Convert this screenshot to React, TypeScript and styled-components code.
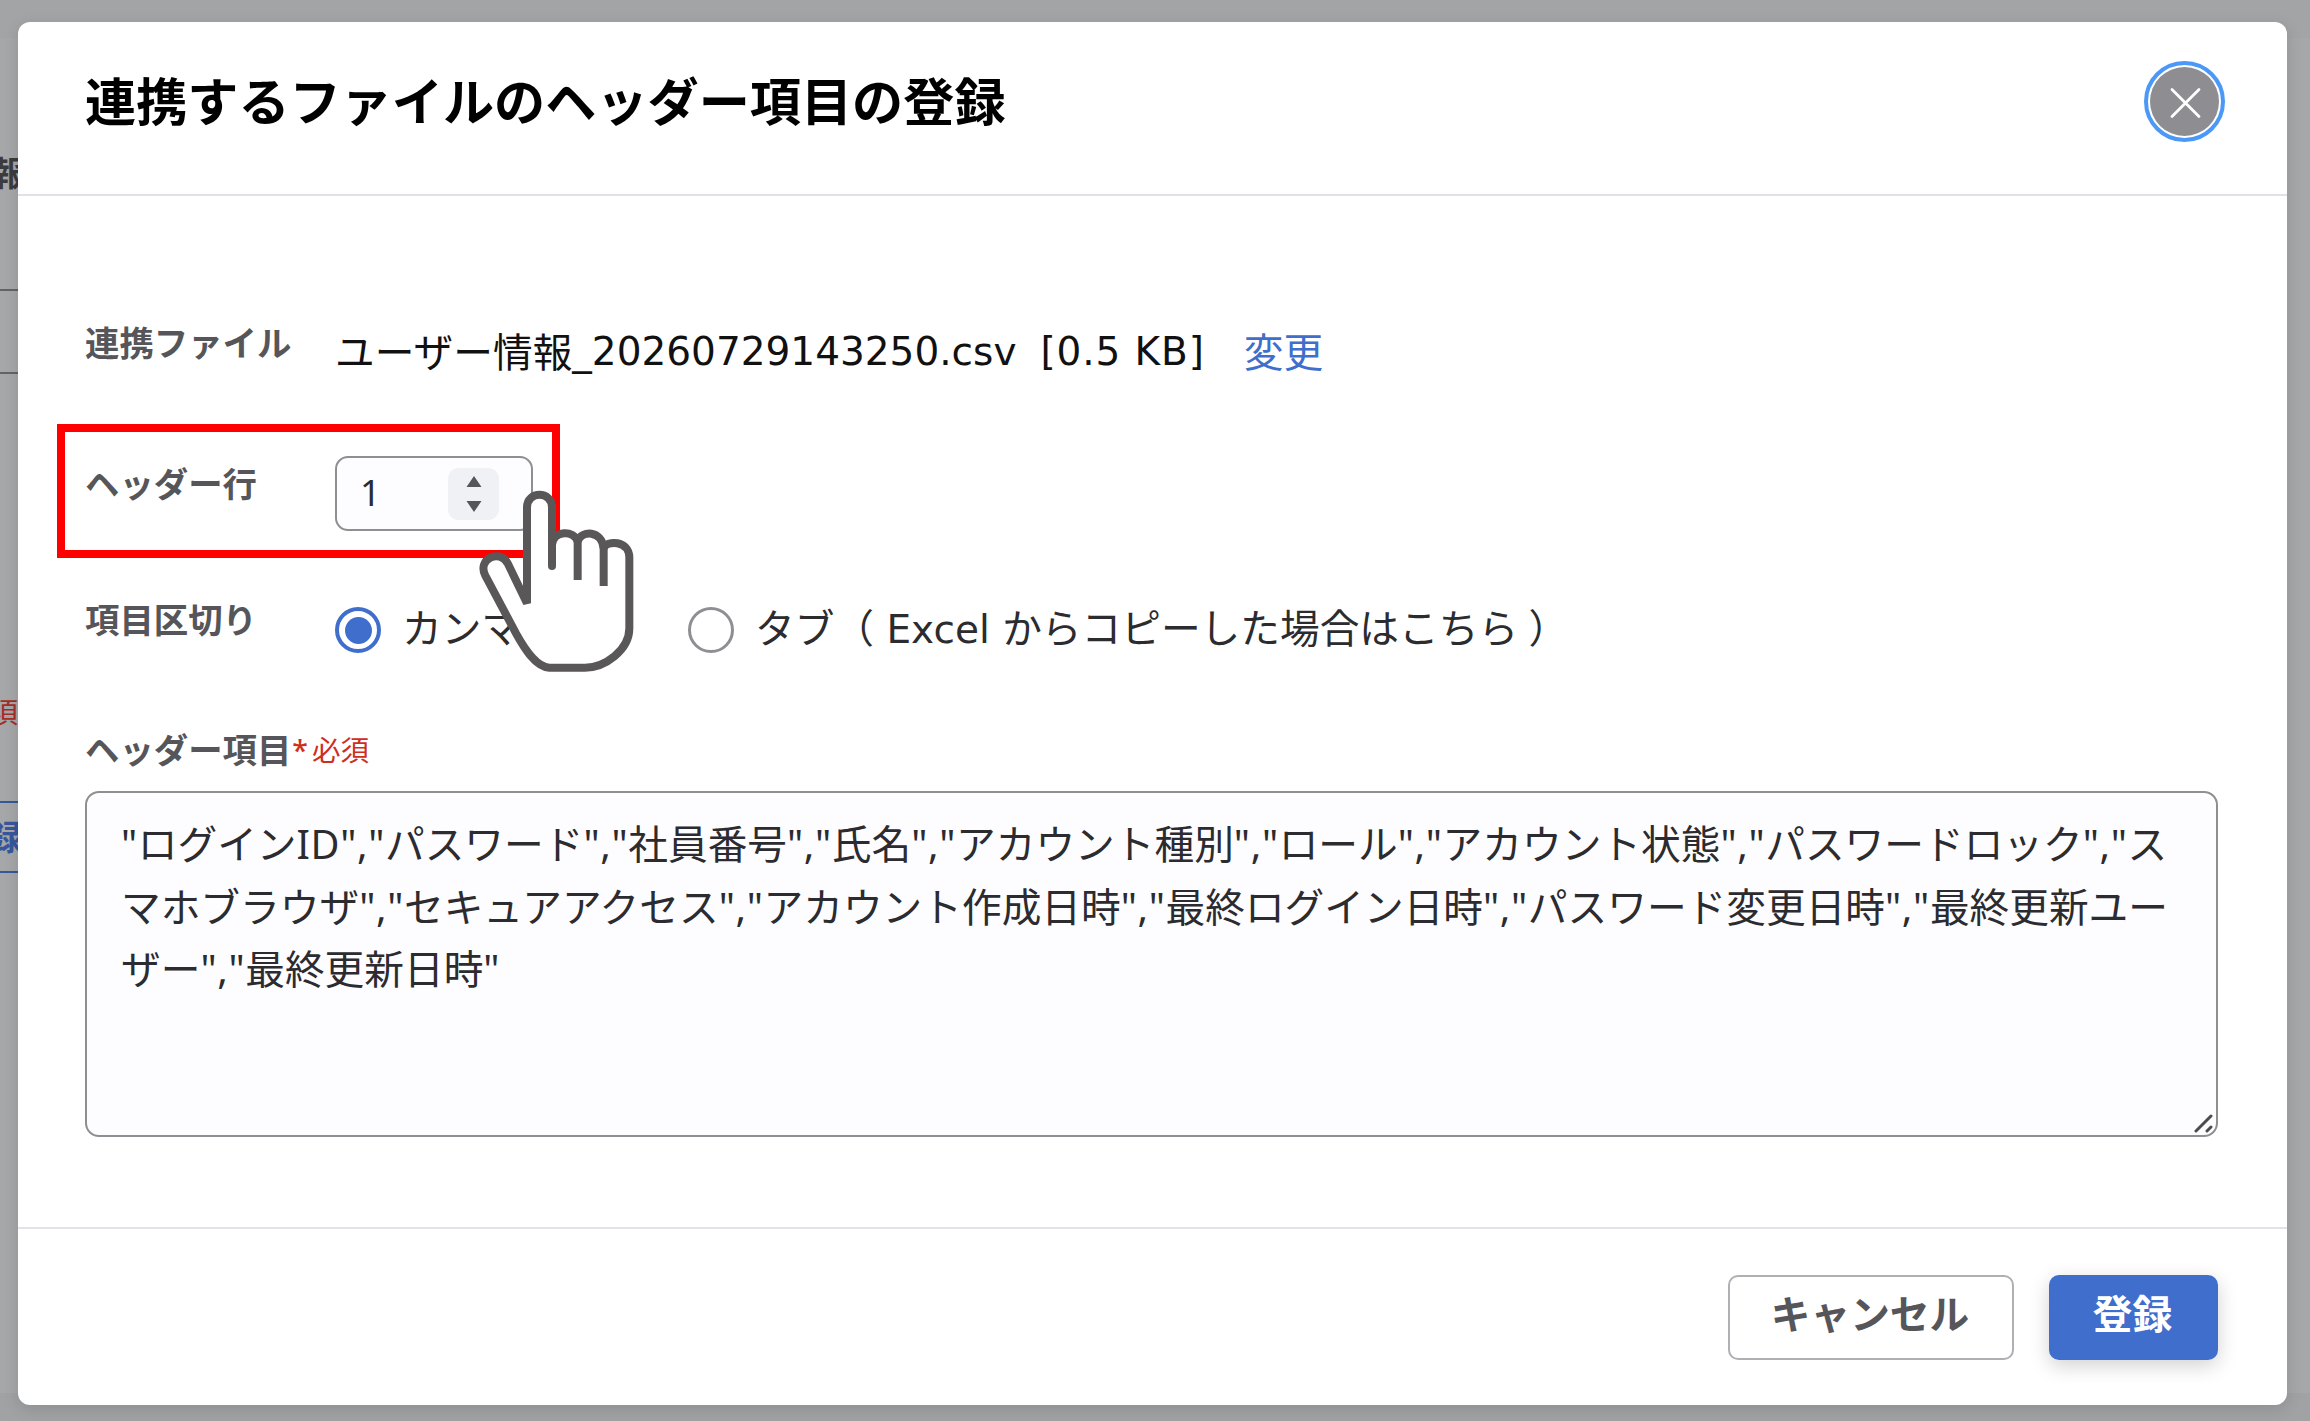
import React from "react";
import styled, { createGlobalStyle } from "styled-components";

const GlobalStyle = createGlobalStyle`
  *, *::before, *::after { box-sizing: border-box; }
  body {
    margin: 0;
    background: #a5a6a8;
    font-family: "Noto Sans", "Noto Sans CJK JP", sans-serif;
    overflow: hidden;
  }
`;

const Screen = styled.div`
  position: relative;
  width: 2310px;
  height: 1421px;
  overflow: hidden;
  background: linear-gradient(#a3a4a6 38px, #a6a7a9 38px, #a6a7a9 1393px, #a1a2a4 1393px);
`;

const PageBehind = styled.div`
  display: flex;
  flex-direction: column;
  align-items: flex-end;
  width: 18px;
  height: 1421px;
  padding-top: 148px;
  overflow: hidden;
`;

const BehindText = styled.span<{ $size: number; $color: string; $bold?: boolean; $shift: number; $top?: number }>`
  flex: none;
  margin-top: ${(p) => p.$top ?? 0}px;
  font-size: ${(p) => p.$size}px;
  line-height: 50px;
  height: 50px;
  color: ${(p) => p.$color};
  font-weight: ${(p) => (p.$bold ? 700 : 400)};
  margin-right: ${(p) => -p.$shift}px;
  white-space: nowrap;
`;

const BehindField = styled.div<{ $top: number; $height: number; $color: string }>`
  flex: none;
  display: flex;
  justify-content: flex-end;
  align-items: center;
  width: 18px;
  height: ${(p) => p.$height}px;
  margin-top: ${(p) => p.$top}px;
  border-top: 2px solid ${(p) => p.$color};
  border-bottom: 2px solid ${(p) => p.$color};
`;

const Dialog = styled.section`
  position: absolute;
  left: 18px;
  top: 22px;
  display: flex;
  flex-direction: column;
  width: 2269px;
  height: 1383px;
  border-radius: 12px;
  background: #fff;
  box-shadow: 0 4px 16px rgba(0, 0, 0, 0.13);
`;

const Header = styled.header`
  flex: none;
  display: flex;
  justify-content: space-between;
  align-items: flex-start;
  height: 174px;
  padding: 39px 62px 0 67px;
  border-bottom: 2px solid #e0e0e6;
`;

const Title = styled.h1`
  margin: 0;
  padding-top: 2px;
  font-size: 51.15px;
  line-height: 76px;
  font-weight: 700;
  color: #000;
`;

const CloseButton = styled.button`
  display: flex;
  align-items: center;
  justify-content: center;
  width: 81px;
  height: 81px;
  border: 4px solid #4a98f7;
  border-radius: 50%;
  background: #8e8d92;
  background-clip: content-box;
  padding: 2px;
`;

const Body = styled.div`
  flex: 1;
  padding: 126px 69px 0 67px;
`;

const Row = styled.div<{ $height: number; $gap: number }>`
  display: grid;
  grid-template-columns: 250px 1fr;
  align-items: start;
  height: ${(p) => p.$height}px;
  margin-bottom: ${(p) => p.$gap}px;
`;

const Label = styled.label<{ $offset?: number }>`
  margin-top: ${(p) => p.$offset ?? 0}px;
  font-size: 34.4px;
  line-height: 50px;
  font-weight: 700;
  color: #56565a;
`;

const FileLine = styled.div`
  display: flex;
  align-items: center;
  height: 60px;
  font-size: 39.7px;
  line-height: 60px;
  color: #111;
  white-space: pre;
`;

const Latin = styled.span<{ $gap?: number; $spacing?: number }>`
  font-family: "DejaVu Sans", sans-serif;
  font-size: 39px;
  letter-spacing: ${(p) => p.$spacing ?? 0}px;
  margin-left: ${(p) => p.$gap ?? 0}px;
`;

const ChangeLink = styled.a`
  margin-left: 39px;
  color: #3f6ecd;
`;

const NumberField = styled.div`
  display: flex;
  align-items: center;
  justify-content: space-between;
  width: 198px;
  height: 75px;
  padding: 0 32px 0 23px;
  border: 2px solid #8f8f93;
  border-radius: 13px;
  background: #fdfdff;
  font-size: 36px;
  color: #2b2b30;
`;

const NumberValue = styled.span`
  padding-bottom: 2px;
`;

const Spinner = styled.span`
  display: flex;
  align-items: center;
  justify-content: center;
  width: 51px;
  height: 52px;
  border-radius: 11px;
  background: #f0f1f5;
`;

const RadioGroup = styled.div`
  display: flex;
  align-items: center;
  height: 50px;
`;

const Radio = styled.div<{ $width: number }>`
  display: flex;
  align-items: center;
  gap: 21px;
  width: ${(p) => p.$width}px;
  font-size: 39.7px;
  line-height: 50px;
  color: #2b2b30;
  white-space: nowrap;
`;

const RadioMark = styled.span<{ $checked?: boolean }>`
  flex: none;
  display: flex;
  align-items: center;
  justify-content: center;
  width: 46px;
  height: 46px;
  margin-top: 2px;
  border: ${(p) => (p.$checked ? "4px solid #3f6ecd" : "3px solid #8f8f93")};
  border-radius: 50%;
  &::after {
    content: "";
    width: 27px;
    height: 27px;
    border-radius: 50%;
    background: ${(p) => (p.$checked ? "#3f6ecd" : "transparent")};
  }
`;

const RadioText = styled.span`
  height: 50px;
  margin-bottom: 3px;
`;

const FieldTitle = styled.div`
  display: flex;
  align-items: center;
  height: 50px;
  margin-bottom: 16px;
`;

const Required = styled.span`
  font-size: 28.5px;
  line-height: 50px;
  color: #cf2e1c;
`;

const Asterisk = styled.span`
  margin: 0 4px 0 1px;
  font-weight: 500;
`;

const HeaderText = styled.div`
  position: relative;
  height: 346px;
  padding: 20px 0 0 34px;
  border: 2px solid #8f8f93;
  border-radius: 14px;
  background: #fdfdff;
  font-size: 39.7px;
  line-height: 62.6px;
  color: #2b2b30;
`;

const TextLine = styled.div`
  white-space: pre;
`;

const AsciiRun = styled.span`
  letter-spacing: 0.6px;
`;

const Grip = styled.svg`
  position: absolute;
  right: 0;
  bottom: 0;
`;

const Footer = styled.footer`
  flex: none;
  display: flex;
  justify-content: flex-end;
  gap: 35px;
  height: 178px;
  padding: 46px 69px 0 0;
  border-top: 2px solid #e2e3e8;
`;

const Button = styled.button<{ $primary?: boolean; $width: number }>`
  width: ${(p) => p.$width}px;
  height: 85px;
  padding: 0 2px 8px 0;
  border: ${(p) => (p.$primary ? "none" : "2px solid #b0b0b4")};
  border-radius: 10px;
  background: ${(p) => (p.$primary ? "#3f6ecd" : "#fff")};
  box-shadow: ${(p) => (p.$primary ? "0 6px 20px rgba(0, 0, 0, 0.18)" : "none")};
  color: ${(p) => (p.$primary ? "#fff" : "#56565a")};
  font-family: inherit;
  font-size: 39.7px;
  line-height: 60px;
  font-weight: 700;
`;

const Highlight = styled.div`
  position: absolute;
  left: 57px;
  top: 424px;
  width: 503px;
  height: 134px;
  border: 8px solid #f00;
`;

const Pointer = styled.svg`
  position: absolute;
  left: 470px;
  top: 480px;
`;

const headerLines = [
  '"ログインID","パスワード","社員番号","氏名","アカウント種別","ロール","アカウント状態","パスワードロック","ス',
  'マホブラウザ","セキュアアクセス","アカウント作成日時","最終ログイン日時","パスワード変更日時","最終更新ユー',
  'ザー","最終更新日時"',
];

function MixedLine({ text }: { text: string }) {
  return (
    <TextLine>
      {text.split(/([ -~]+)/).map((part, i) => (i % 2 ? <AsciiRun key={i}>{part}</AsciiRun> : part))}
    </TextLine>
  );
}

export default function App() {
  return (
    <Screen>
      <GlobalStyle />
      <PageBehind>
        <BehindText $size={34} $color="#3c3c40" $bold $shift={8}>報</BehindText>
        <BehindField $top={91} $height={85} $color="#646467" />
        <BehindText $size={28.5} $color="#a52d25" $shift={0} $top={313}>須</BehindText>
        <BehindField $top={64} $height={72} $color="#37579d">
          <BehindText $size={34} $color="#37579d" $bold $shift={4}>録</BehindText>
        </BehindField>
      </PageBehind>

      <Dialog>
        <Header>
          <Title>連携するファイルのヘッダー項目の登録</Title>
          <CloseButton aria-label="閉じる">
            <svg width="34" height="34" viewBox="0 0 34 34" stroke="#fff" strokeWidth="2.8" strokeLinecap="round">
              <path d="M4 4.5 L31 31.5 M31 4.5 L4 31.5" />
            </svg>
          </CloseButton>
        </Header>

        <Body>
          <Row $height={60} $gap={74}>
            <Label $offset={-4}>連携ファイル</Label>
            <FileLine>
              ユーザー情報<Latin>_20260729143250.csv</Latin>
              <Latin $gap={24} $spacing={0.9}>[0.5 KB]</Latin>
              <ChangeLink>変更</ChangeLink>
            </FileLine>
          </Row>
          <Row $height={74} $gap={74}>
            <Label $offset={3}>ヘッダー行</Label>
            <NumberField>
              <NumberValue>1</NumberValue>
              <Spinner>
                <svg width="16" height="36" viewBox="0 0 16 36" fill="#56565a">
                  <path d="M8 0 L15.5 11 H0.5 Z M8 36 L0.5 25 H15.5 Z" />
                </svg>
              </Spinner>
            </NumberField>
          </Row>
          <Row $height={50} $gap={71}>
            <Label $offset={-9}>項目区切り</Label>
            <RadioGroup>
              <Radio $width={353}>
                <RadioMark $checked />
                <RadioText>カンマ</RadioText>
              </Radio>
              <Radio $width={900}>
                <RadioMark />
                <RadioText>
                  タブ（<Latin> Excel </Latin>からコピーした場合はこちら ）
                </RadioText>
              </Radio>
            </RadioGroup>
          </Row>
          <FieldTitle>
            <Label>ヘッダー項目</Label>
            <Required>
              <Asterisk>*</Asterisk>必須
            </Required>
          </FieldTitle>
          <HeaderText>
            {headerLines.map((line) => (
              <MixedLine key={line} text={line} />
            ))}
            <Grip width="22" height="22" viewBox="0 0 22 22" stroke="#4c4c50" strokeWidth="3" strokeLinecap="round">
              <path d="M2 18 L17 3 M13 18 L17 14" />
            </Grip>
          </HeaderText>
        </Body>

        <Footer>
          <Button $width={286}>キャンセル</Button>
          <Button $width={169} $primary>登録</Button>
        </Footer>
      </Dialog>

      <Highlight />
      <Pointer width="180" height="200" viewBox="0 0 540 600" stroke="#595757" strokeWidth="24" fill="none">
        <path
          fill="#fff"
          strokeLinejoin="bevel"
          d="M171 370 V82 C171 32 246 32 246 82 V195 C250 150 312 150 323 184 C334 150 396 150 401 205 C408 180 478 180 478 232 V445 C478 510 405 563 345 563 H238 C195 560 160 500 138 460 L46 287 C20 236 90 206 113 250 Z"
        />
        <path strokeLinecap="round" d="M246 190 V258" />
        <path d="M323 180 V300 M401 195 V318" />
      </Pointer>
    </Screen>
  );
}
